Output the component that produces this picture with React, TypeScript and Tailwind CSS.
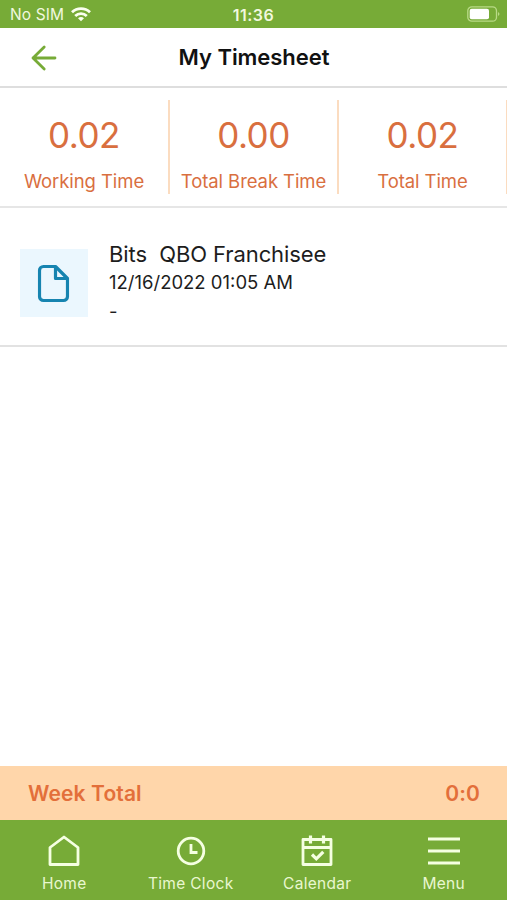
import type { ReactNode } from 'react';

const stats = [
  { value: '0.02', label: 'Working Time' },
  { value: '0.00', label: 'Total Break Time' },
  { value: '0.02', label: 'Total Time' },
];

function StatusBar() {
  return (
    <div className="relative flex h-[28px] shrink-0 items-center justify-between bg-[#77ab37] pl-[10px] pr-[7px] text-[#f1f8df]">
      <div className="flex items-center gap-[7px]">
        <span className="translate-y-[1px] text-[15.5px] leading-[28px] tracking-[0.1px]">No SIM</span>
        <svg width="20" height="15" viewBox="0 0 20 15" fill="none" stroke="#fafff0" strokeWidth="2.8">
          <path d="M1 5.3C6 .5 14 .5 19 5.3" />
          <path d="M4.2 8.9c3.3-3.1 8.3-3.1 11.6 0" />
          <path d="M7 11.2c1.8-1.6 4.2-1.6 6 0l-3 3z" fill="#fafff0" stroke="none" />
        </svg>
      </div>
      <span className="absolute inset-x-0 translate-y-[1px] text-center text-[16px] font-semibold leading-[28px] tracking-[0.5px]">11:36</span>
      <svg width="33" height="16" viewBox="0 0 33 16" fill="none">
        <rect x="0.8" y="0.8" width="28.7" height="14.4" rx="4" stroke="#b9da87" strokeWidth="1.3" />
        <rect x="2.7" y="2.7" width="19.3" height="10.6" rx="2" fill="#fff" />
        <path d="M31 6v4c2-1 2-3 0-4z" fill="#b9da87" />
      </svg>
    </div>
  );
}

function Header() {
  return (
    <header className="relative flex h-[60px] shrink-0 items-center border-b-2 border-[#dedede] pl-[31px]">
      <svg width="26" height="26" viewBox="0 0 26 26" fill="none" stroke="#77ab37" strokeWidth="2.8" strokeLinecap="round" strokeLinejoin="round" className="translate-y-[1px]">
        <path d="M24 13H2M13.2 2L2 13l11.2 11" />
      </svg>
      <h1 className="absolute inset-x-0 pl-[1px] text-center text-[22px] font-semibold leading-[59px] tracking-[-0.05px] text-[#111]">My Timesheet</h1>
    </header>
  );
}

function NavItem({ label, children }: { label: string; children: ReactNode }) {
  return (
    <div className="flex flex-1 flex-col items-center pt-[14px]">
      <svg width="34" height="34" viewBox="0 0 34 34" fill="none" stroke="#f5ffe2" strokeWidth="2.8">
        {children}
      </svg>
      <span className="mt-[6px] whitespace-nowrap text-[15.5px] leading-[20px] tracking-[0.3px] text-[#e9f7d0]">{label}</span>
    </div>
  );
}

export default function App() {
  return (
    <div className="flex h-[900px] w-[507px] flex-col overflow-hidden bg-white font-['Inter','Liberation_Sans',sans-serif]">
      <StatusBar />
      <Header />
      <section className="h-[120px] shrink-0 border-b-2 border-[#e6e6e6] pt-[12px] text-[#d96f3f]">
        <div className="grid h-[93px] w-[508px] grid-cols-[170px_169px_169px]">
          {stats.map((stat) => (
            <div key={stat.label} className="flex flex-col items-center whitespace-nowrap border-r-2 border-[#fbdcc0] pt-[14px]">
              <span className="text-[35px] leading-[42px] tracking-[-0.5px]">{stat.value}</span>
              <span className="mt-[12px] text-[18.5px] leading-[26px] tracking-[-0.08px]">{stat.label}</span>
            </div>
          ))}
        </div>
      </section>
      <section className="flex h-[139px] shrink-0 border-b-2 border-[#e2e2e2] pl-[20px] pt-[31px] text-[#1d1d1d]">
        <div className="mt-[10px] flex size-[68px] items-center justify-center bg-[#ebf7fe]">
          <svg width="32" height="38" viewBox="0 0 32 38" fill="none" stroke="#1684b0" strokeWidth="3.2" strokeLinejoin="round" className="-translate-x-[0.5px] translate-y-[0.5px]">
            <path d="M6 2h12L30 14v18a4 4 0 0 1-4 4H6a4 4 0 0 1-4-4V6a4 4 0 0 1 4-4z" />
            <path d="M18 2v12h12" />
          </svg>
        </div>
        <div className="ml-[21px] flex flex-col whitespace-pre">
          <span className="text-[22px] leading-[30px] tracking-[-0.09px]">Bits  QBO Franchisee</span>
          <span className="text-[18.5px] leading-[26px]">12/16/2022 01:05 AM</span>
          <span className="mt-[3px] text-[18.5px] leading-[27px]">-</span>
        </div>
      </section>
      <main className="flex-1" />
      <section className="flex h-[54px] shrink-0 items-center justify-between bg-[#ffd6aa] pl-[28px] pr-[27px] text-[21px] font-semibold tracking-[0.12px] text-[#e36f3a]">
        <span className="translate-y-[1px]">Week Total</span>
        <span className="translate-y-[1px]">0:0</span>
      </section>
      <nav className="flex h-[80px] shrink-0 bg-[#77ab37] pl-[1px]">
        <NavItem label="Home">
          <path d="M3 13.5L17 3l14 10.500V30.500H3z" strokeLinejoin="round" />
        </NavItem>
        <NavItem label="Time Clock">
          <circle cx="17" cy="17" r="12.8" />
          <path d="M17 10v8.500h6.500" />
        </NavItem>
        <NavItem label="Calendar">
          <path d="M3 5.500h28v25H3zM3 13.500h28" strokeWidth="2.8" strokeLinejoin="round" />
          <path d="M10.500 1.500v8M23.500 1.500v8M12 20.500l4.300 4.300 7-7" strokeWidth="3.2" />
        </NavItem>
        <NavItem label="Menu">
          <path d="M1 5h32M1 17h32M1 29h32" strokeWidth="3.2" />
        </NavItem>
      </nav>
    </div>
  );
}
